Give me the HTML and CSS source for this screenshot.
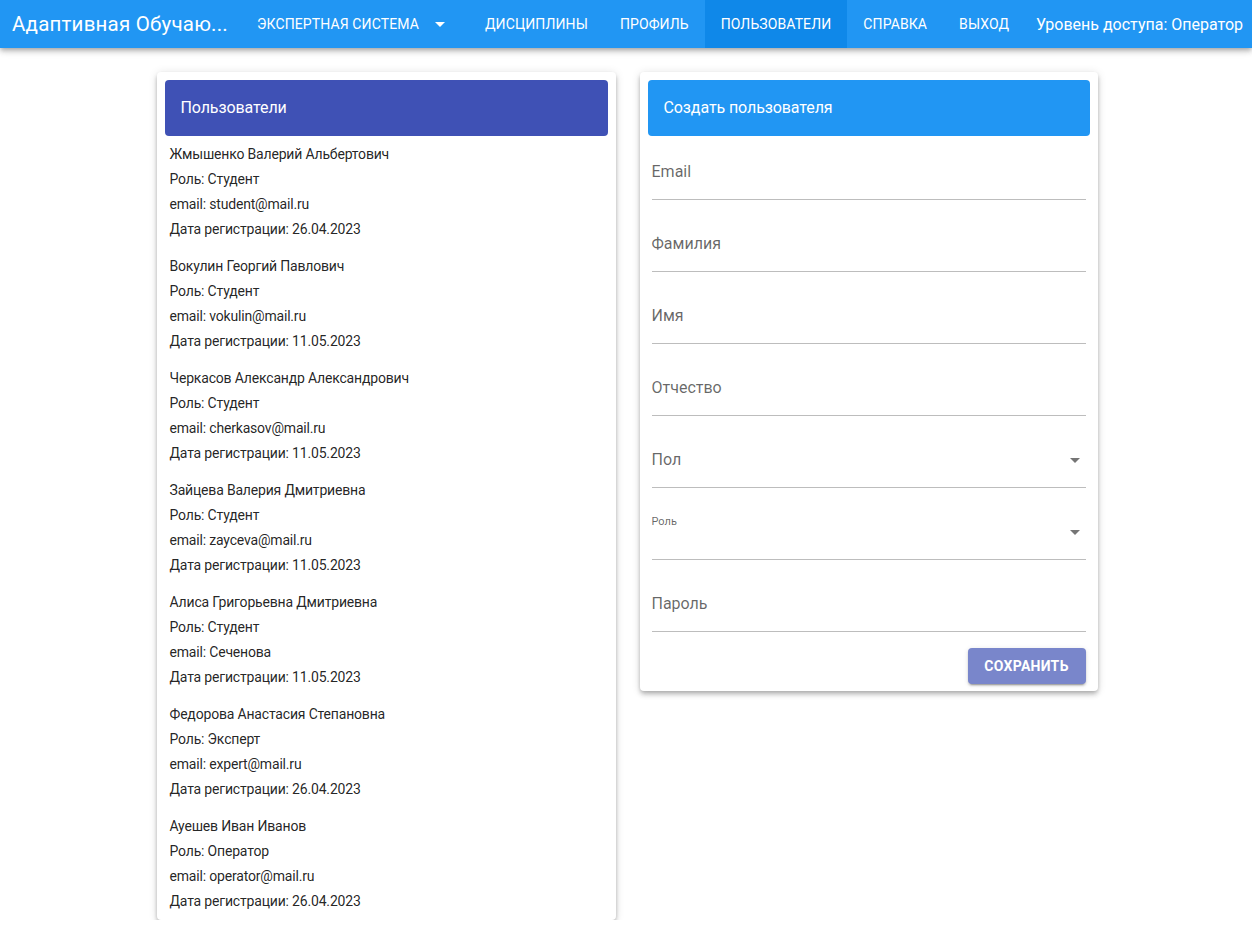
FILE: index.html
```html
<!DOCTYPE html>
<html lang="ru">
<head>
<meta charset="utf-8">
<title>Пользователи</title>
<link rel="stylesheet" href="styles.css">
</head>
<body>
<header class="topbar">
  <div class="brand">Адаптивная Обучаю...</div>
  <nav class="menu">
    <a class="menu-item menu-drop">ЭКСПЕРТНАЯ СИСТЕМА <span class="caret"></span></a>
    <a class="menu-item">ДИСЦИПЛИНЫ</a>
    <a class="menu-item">ПРОФИЛЬ</a>
    <a class="menu-item active">ПОЛЬЗОВАТЕЛИ</a>
    <a class="menu-item">СПРАВКА</a>
    <a class="menu-item">ВЫХОД</a>
  </nav>
  <div class="access">Уровень доступа: Оператор</div>
</header>

<main class="content">
  <section class="card users">
    <div class="card-head indigo">Пользователи</div>
    <div class="user-list">
      <div class="user">
        <div class="line">Жмышенко Валерий Альбертович</div>
        <div class="line">Роль: Студент</div>
        <div class="line">email: student@mail.ru</div>
        <div class="line">Дата регистрации: 26.04.2023</div>
      </div>
      <div class="user">
        <div class="line">Вокулин Георгий Павлович</div>
        <div class="line">Роль: Студент</div>
        <div class="line">email: vokulin@mail.ru</div>
        <div class="line">Дата регистрации: 11.05.2023</div>
      </div>
      <div class="user">
        <div class="line">Черкасов Александр Александрович</div>
        <div class="line">Роль: Студент</div>
        <div class="line">email: cherkasov@mail.ru</div>
        <div class="line">Дата регистрации: 11.05.2023</div>
      </div>
      <div class="user">
        <div class="line">Зайцева Валерия Дмитриевна</div>
        <div class="line">Роль: Студент</div>
        <div class="line">email: zayceva@mail.ru</div>
        <div class="line">Дата регистрации: 11.05.2023</div>
      </div>
      <div class="user">
        <div class="line">Алиса Григорьевна Дмитриевна</div>
        <div class="line">Роль: Студент</div>
        <div class="line">email: Сеченова</div>
        <div class="line">Дата регистрации: 11.05.2023</div>
      </div>
      <div class="user">
        <div class="line">Федорова Анастасия Степановна</div>
        <div class="line">Роль: Эксперт</div>
        <div class="line">email: expert@mail.ru</div>
        <div class="line">Дата регистрации: 26.04.2023</div>
      </div>
      <div class="user">
        <div class="line">Ауешев Иван Иванов</div>
        <div class="line">Роль: Оператор</div>
        <div class="line">email: operator@mail.ru</div>
        <div class="line">Дата регистрации: 26.04.2023</div>
      </div>
    </div>
  </section>

  <section class="card create">
    <div class="card-head blue">Создать пользователя</div>
    <form class="form">
      <div class="field"><span class="label">Email</span></div>
      <div class="field"><span class="label">Фамилия</span></div>
      <div class="field"><span class="label">Имя</span></div>
      <div class="field"><span class="label">Отчество</span></div>
      <div class="field select"><span class="label">Пол</span><span class="arrow"></span></div>
      <div class="field select"><span class="label small">Роль</span><span class="arrow"></span></div>
      <div class="field"><span class="label">Пароль</span></div>
      <div class="actions"><button type="button" class="save">СОХРАНИТЬ</button></div>
    </form>
  </section>
</main>
</body>
</html>
```

FILE: styles.css
```css
* { box-sizing: border-box; }

html, body {
  margin: 0;
  padding: 0;
  background: #fff;
  font-family: Roboto, "Noto Sans", Arial, sans-serif;
  color: rgba(0, 0, 0, 0.87);
}

.topbar {
  height: 48px;
  background: #2196f3;
  color: #fff;
  display: flex;
  align-items: center;
  padding: 0 9px 0 12px;
  box-shadow: 0 2px 4px -1px rgba(0,0,0,.2), 0 4px 5px 0 rgba(0,0,0,.14), 0 1px 10px 0 rgba(0,0,0,.12);
  position: relative;
  z-index: 2;
}

.brand {
  font-size: 20.5px;
  letter-spacing: 0.01em;
  width: 229px;
  white-space: nowrap;
  flex: none;
}

.menu {
  display: flex;
  height: 48px;
}

.menu-item {
  display: flex;
  align-items: center;
  height: 48px;
  padding: 0 16px;
  font-size: 14px;
  letter-spacing: 0.008em;
  white-space: nowrap;
  cursor: pointer;
}

.menu-drop { margin-right: 8px; }

.caret {
  display: inline-block;
  width: 0;
  height: 0;
  margin-left: 16px;
  border-left: 5px solid transparent;
  border-right: 5px solid transparent;
  border-top: 5px solid #fff;
}

.menu-item.active { background: #0f88e9; }

.access {
  margin-left: auto;
  font-size: 16px;
  white-space: nowrap;
}

.content {
  display: flex;
  justify-content: center;
  align-items: flex-start;
  gap: 24px;
  padding: 24px 0 0 2px;
}

.card {
  background: #fff;
  border-radius: 4px;
  box-shadow: 0 2px 4px -1px rgba(0,0,0,.2), 0 4px 5px 0 rgba(0,0,0,.14), 0 1px 10px 0 rgba(0,0,0,.12);
  padding: 8px 0 0;
}

.users { width: 459px; padding-bottom: 6px; }
.create { width: 458px; padding-bottom: 7px; }

.card-head {
  margin: 0 8px;
  height: 56px;
  border-radius: 4px;
  color: #fff;
  font-size: 16px;
  letter-spacing: -0.1px;
  display: flex;
  align-items: center;
  padding: 0 0 2px 16px;
}

.indigo { background: #3f51b5; }
.blue { background: #2196f3; }

.user-list {
  padding: 6px 12px 0 13px;
  display: flex;
  flex-direction: column;
  gap: 12px;
}

.line {
  height: 25px;
  line-height: 25px;
  font-size: 14px;
  letter-spacing: -0.18px;
  color: rgba(0, 0, 0, 0.87);
  white-space: nowrap;
}

.form {
  padding: 0 12px;
  margin: 0;
}

.field {
  height: 72px;
  padding-top: 24px;
  position: relative;
}

.field::after {
  content: "";
  position: absolute;
  left: 0;
  right: 0;
  top: 63px;
  height: 1px;
  background: #bdbdbd;
}

.label {
  display: block;
  font-size: 16px;
  line-height: 24px;
  color: rgba(0, 0, 0, 0.6);
}

.label.small {
  font-size: 11px;
  line-height: 16px;
  margin-top: -6px;
}

.arrow {
  position: absolute;
  right: 6px;
  top: 34px;
  width: 0;
  height: 0;
  border-left: 5px solid transparent;
  border-right: 5px solid transparent;
  border-top: 5px solid rgba(0, 0, 0, 0.54);
}

.actions {
  display: flex;
  justify-content: flex-end;
  padding-top: 8px;
}

.save {
  width: 118px;
  height: 36px;
  border: 0;
  border-radius: 4px;
  background: #7986cb;
  color: #fff;
  font-family: Roboto, Arial, sans-serif;
  font-size: 14px;
  font-weight: 700;
  letter-spacing: 0.02em;
  box-shadow: 0 3px 1px -2px rgba(0,0,0,.2), 0 2px 2px 0 rgba(0,0,0,.14), 0 1px 5px 0 rgba(0,0,0,.12);
  cursor: pointer;
}
```
